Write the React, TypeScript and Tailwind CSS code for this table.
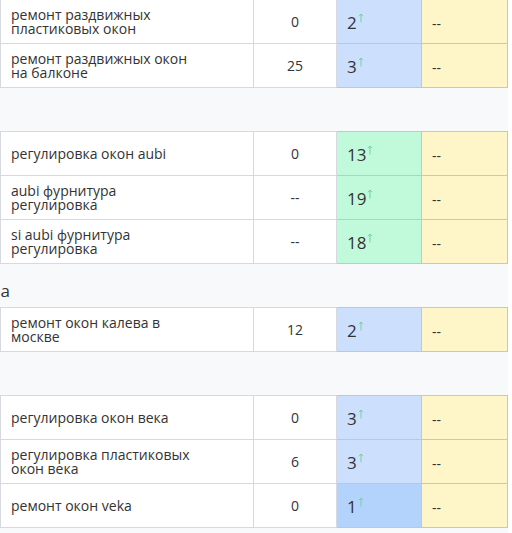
import React from "react";

type Row = {
  name: string;
  freq: string;
  pos: number;
  tone: "blue" | "green" | "deep";
};

type Block = { label?: string; rows: Row[] };

const blocks: Block[] = [
  {
    rows: [
      { name: "ремонт раздвижных пластиковых окон", freq: "0", pos: 2, tone: "blue" },
      { name: "ремонт раздвижных окон на балконе", freq: "25", pos: 3, tone: "blue" },
    ],
  },
  {
    rows: [
      { name: "регулировка окон aubi", freq: "0", pos: 13, tone: "green" },
      { name: "aubi фурнитура регулировка", freq: "--", pos: 19, tone: "green" },
      { name: "si aubi фурнитура регулировка", freq: "--", pos: 18, tone: "green" },
    ],
  },
  {
    label: "a",
    rows: [{ name: "ремонт окон калева в москве", freq: "12", pos: 2, tone: "blue" }],
  },
  {
    rows: [
      { name: "регулировка окон века", freq: "0", pos: 3, tone: "blue" },
      { name: "регулировка пластиковых окон века", freq: "6", pos: 3, tone: "blue" },
      { name: "ремонт окон veka", freq: "0", pos: 1, tone: "deep" },
    ],
  },
];

const toneClass = {
  blue: "bg-[#cce0fd]",
  green: "bg-[#c1fadb]",
  deep: "bg-[#b3d3fd]",
};

function UpArrow() {
  return (
    <svg width="6" height="10" viewBox="0 0 6 10" className="ml-[1px] -mt-[10px]">
      <path d="M3 9.5V1M1 3.2L3 1l2 2.2" stroke="#6fd39a" strokeWidth="1" fill="none" />
    </svg>
  );
}

function Spacer({ label }: { label?: string }) {
  return (
    <tr>
      <td colSpan={4} className="h-[44px] p-0 align-bottom">
        {label && <div className="text-[17px] leading-[22px] text-[#333] pb-[5px]">{label}</div>}
      </td>
    </tr>
  );
}

export default function App() {
  return (
    <div className="w-[508px] min-h-[533px] bg-[#f8f9fb] overflow-hidden" style={{ fontFamily: "'Open Sans', sans-serif" }}>
      <table className="w-[507px] -mt-px border-collapse table-fixed text-[14px] text-[#333]">
        <colgroup>
          <col className="w-[253px]" />
          <col className="w-[83px]" />
          <col className="w-[85px]" />
          <col className="w-[86px]" />
        </colgroup>
        <tbody>
          {blocks.map((b, bi) => (
            <React.Fragment key={bi}>
              {bi > 0 && <Spacer label={b.label} />}
              {b.rows.map((r) => (
                <tr key={r.name} className="h-[44px]">
                  <td className="bg-white border border-[#d6d9e0] pl-[10px] pr-2 leading-[14px]">
                    <div className="max-w-[192px]">{r.name}</div>
                  </td>
                  <td className="bg-white border border-[#d6d9e0] text-center">{r.freq}</td>
                  <td className={`${toneClass[r.tone]} border border-[#c3c6cc] pl-[10px] pt-[3px]`}>
                    <div className="flex items-center text-[17px] leading-[22px]">
                      {r.pos}
                      <UpArrow />
                    </div>
                  </td>
                  <td className="bg-[#fef6c8] border border-[#c3c6cc] pl-[10px] pt-[4px]">--</td>
                </tr>
              ))}
            </React.Fragment>
          ))}
        </tbody>
      </table>
    </div>
  );
}
